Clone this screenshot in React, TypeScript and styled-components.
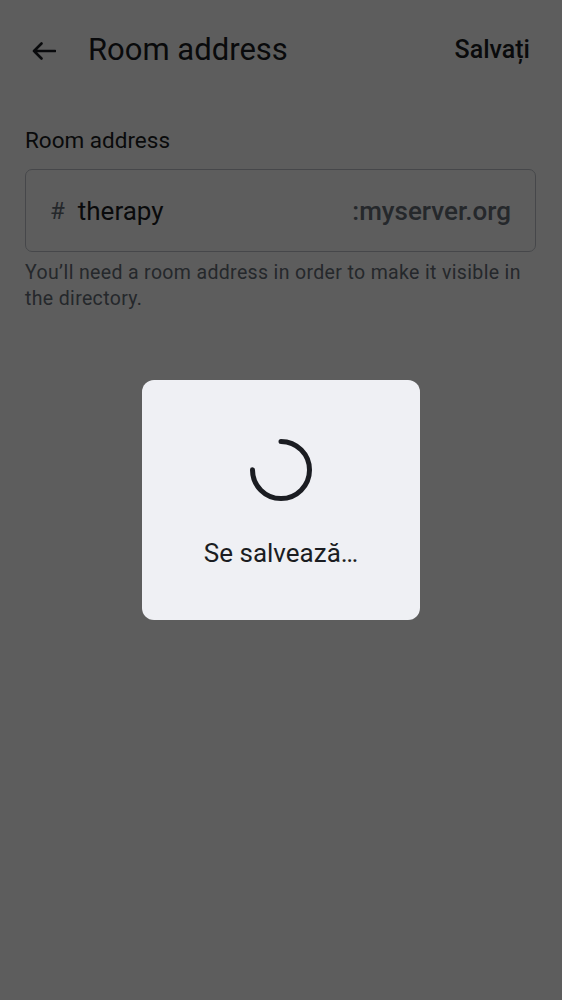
import React from "react";
import styled, { createGlobalStyle } from "styled-components";

const GlobalStyle = createGlobalStyle`
  html, body {
    margin: 0;
    padding: 0;
    background: #ffffff;
  }
  body {
    font-family: Roboto, "Noto Sans", "Liberation Sans", sans-serif;
    color: #1b1d22;
    -webkit-font-smoothing: antialiased;
  }
`;

const Page = styled.div`
  position: relative;
  width: 562px;
  height: 1000px;
  background: #ffffff;
  overflow: hidden;
`;

const TopBar = styled.header`
  display: flex;
  align-items: center;
  height: 100px;
  padding: 0 32px 0 31px;
  box-sizing: border-box;
`;

const BackButton = styled.button`
  display: flex;
  align-items: center;
  justify-content: center;
  width: 25px;
  height: 25px;
  padding: 0;
  margin: 2px 32px 0 0;
  border: none;
  background: none;
  color: #1b1d22;
`;

const Title = styled.h1`
  flex: 1;
  margin: 0;
  font-size: 31px;
  font-weight: 400;
  line-height: 38px;
  color: #1b1d22;
`;

const SaveAction = styled.button`
  margin: 0;
  padding: 0;
  border: none;
  background: none;
  font-family: inherit;
  font-size: 25px;
  font-weight: 500;
  line-height: 32px;
  color: #1b1d22;
`;

const Content = styled.main`
  display: flex;
  flex-direction: column;
  padding: 25px 26px 0 25px;
`;

const FieldLabel = styled.label`
  font-size: 22.5px;
  line-height: 30px;
  color: #1b1d22;
  margin-bottom: 14px;
`;

const InputBox = styled.div`
  display: flex;
  align-items: center;
  height: 83px;
  box-sizing: border-box;
  border: 1.5px solid #c0c4cb;
  border-radius: 7px;
  padding: 0 24px 0 24px;
  font-size: 26px;
`;

const Prefix = styled.span`
  color: #656d77;
  font-size: 24px;
  margin-right: 13px;
`;

const InputValue = styled.span`
  flex: 1;
  color: #1b1d22;
`;

const Suffix = styled.span`
  color: #656d77;
  font-weight: 500;
`;

const Helper = styled.p`
  margin: 8px 0 0;
  font-size: 19.5px;
  line-height: 26px;
  letter-spacing: 0.35px;
  color: #656d77;
`;

const Scrim = styled.div`
  position: absolute;
  inset: 0;
  background: rgba(0, 0, 0, 0.635);
  display: flex;
  align-items: center;
  justify-content: center;
`;

const Dialog = styled.div`
  width: 278px;
  height: 240px;
  box-sizing: border-box;
  background: #eff0f4;
  border-radius: 12px;
  display: flex;
  flex-direction: column;
  align-items: center;
  padding-top: 58px;
`;

const Spinner = styled.svg`
  width: 64px;
  height: 64px;
  display: block;
`;

const DialogText = styled.div`
  margin-top: 35px;
  font-size: 26px;
  line-height: 32px;
  color: #1b1d22;
`;

export default function App() {
  const r = 28.5;
  const c = 2 * Math.PI * r;
  return (
    <>
      <GlobalStyle />
      <Page>
        <TopBar>
          <BackButton aria-label="Back">
            <svg width="24" height="18" viewBox="0 0 24 18" fill="none">
              <path
                d="M23 9H2 M9.5 1.5 L2 9 L9.5 16.5"
                stroke="currentColor"
                strokeWidth="2.6"
                strokeLinecap="round"
                strokeLinejoin="round"
              />
            </svg>
          </BackButton>
          <Title>Room address</Title>
          <SaveAction>Salvați</SaveAction>
        </TopBar>
        <Content>
          <FieldLabel>Room address</FieldLabel>
          <InputBox>
            <Prefix>#</Prefix>
            <InputValue>therapy</InputValue>
            <Suffix>:myserver.org</Suffix>
          </InputBox>
          <Helper>
            You’ll need a room address in order to make it visible in the directory.
          </Helper>
        </Content>
        <Scrim>
          <Dialog>
            <Spinner viewBox="0 0 64 64">
              <circle
                cx="32"
                cy="32"
                r={r}
                fill="none"
                stroke="#1b1d22"
                strokeWidth="5"
                strokeLinecap="round"
                strokeDasharray={`${c * 0.75} ${c}`}
                transform="rotate(-90 32 32)"
              />
            </Spinner>
            <DialogText>Se salvează…</DialogText>
          </Dialog>
        </Scrim>
      </Page>
    </>
  );
}
